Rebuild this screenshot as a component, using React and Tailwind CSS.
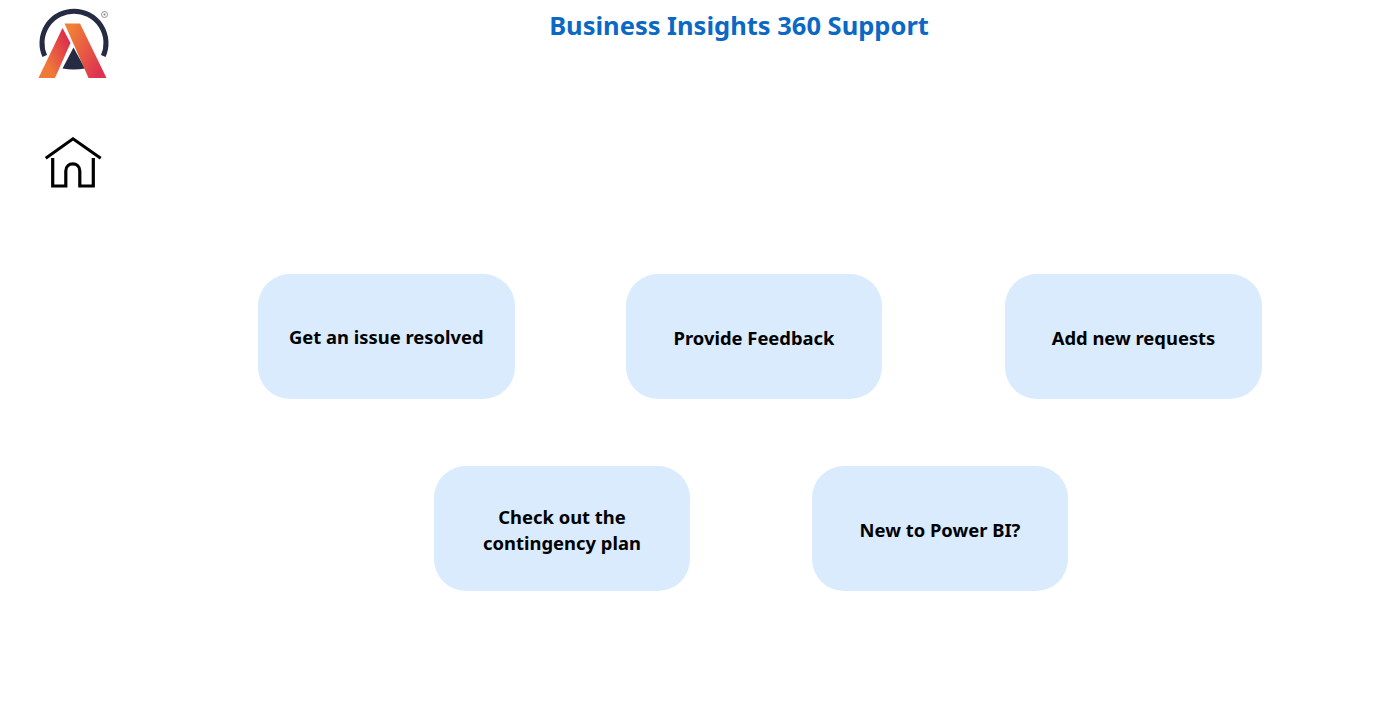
const font = { fontFamily: '"Noto Sans", "Open Sans", sans-serif' };

const Logo = () => (
  <svg viewBox="0 0 100 90" className="w-[100px] h-[90px] block">
    <defs>
      <linearGradient id="leftLeg" x1="0" y1="1" x2="1" y2="0.2">
        <stop offset="0.3" stopColor="#f0783a" />
        <stop offset="1" stopColor="#d9274f" />
      </linearGradient>
      <linearGradient id="rightLeg" x1="0" y1="0" x2="1" y2="0.6">
        <stop offset="0.15" stopColor="#f08035" />
        <stop offset="1" stopColor="#dd3350" />
      </linearGradient>
    </defs>
    <path d="M19.7 56A32 32 0 1 1 78.3 56" fill="none" stroke="#252b42" strokeWidth="5" />
    <path d="M48.5 47.5L60 68.5Q48.5 70.5 37.5 68.5Z" fill="#252b42" />
    <path d="M37.5 28L45.5 43L30 78H13.5Z" fill="url(#leftLeg)" />
    <path d="M39.5 23.5H55L81.5 78H63.5Z" fill="url(#rightLeg)" />
    <circle cx="79.5" cy="14.5" r="3" fill="none" stroke="#777" strokeWidth="0.8" />
    <circle cx="79.5" cy="14.5" r="1" fill="#777" />
  </svg>
);

const HomeIcon = () => (
  <svg viewBox="0 0 58 52" className="w-[58px] h-[52px] block" fill="none" stroke="#000" strokeWidth="3.2">
    <path d="M1.7 21.3L29 1.8L56.7 21.3" strokeWidth="3" />
    <path d="M8.7 21V49H21.8V34C21.8 24.5 35.8 24.5 35.8 34V49H49.3V21" />
  </svg>
);

const Card = ({ children, className = '' }) => (
  <div className={`rounded-[32px] bg-[#d9ebfd] flex items-center justify-center text-center text-[18.4px] leading-[26px] font-bold text-black ${className}`}>
    {children}
  </div>
);

export default function App() {
  return (
    <div className="w-[1399px] h-[723px] bg-white flex overflow-hidden" style={font}>
      <aside className="w-[146px] shrink-0 flex flex-col">
        <div className="ml-[25px]"><Logo /></div>
        <div className="ml-[44px] mt-[47px]"><HomeIcon /></div>
      </aside>
      <main className="flex-1">
        <h1 className="w-[1186px] pt-[7px] text-center text-[25.5px] leading-[36px] font-bold text-[#0b69c4]">
          Business Insights 360 Support
        </h1>
        <div className="mt-[231px] ml-[112px] flex items-start">
          <Card className="w-[256.5px] h-[124.5px] pt-[2px]">Get an issue resolved</Card>
          <Card className="w-[256px] h-[125px] pt-[2px] ml-[111.5px]">Provide Feedback</Card>
          <Card className="w-[257px] h-[125px] pt-[2px] ml-[123px]">Add new requests</Card>
        </div>
        <div className="mt-[67px] ml-[288px] flex">
          <Card className="w-[256px] h-[125px] pt-[2px]">Check out the<br />contingency plan</Card>
          <Card className="w-[256px] h-[125px] pt-[2px] ml-[122px]">New to Power BI?</Card>
        </div>
      </main>
    </div>
  );
}
